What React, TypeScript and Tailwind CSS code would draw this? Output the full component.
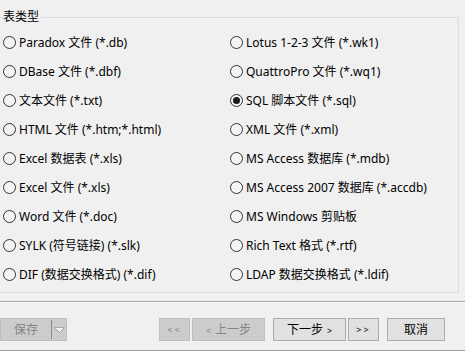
import React from 'react';

interface TypeOption {
	label: string;
	id: string;
}

const leftOptions: TypeOption[] = [
	{ label: 'Paradox 文件 (*.db)', id: 'db' },
	{ label: 'DBase 文件 (*.dbf)', id: 'dbf' },
	{ label: '文本文件 (*.txt)', id: 'txt' },
	{ label: 'HTML 文件 (*.htm;*.html)', id: 'html' },
	{ label: 'Excel 数据表 (*.xls)', id: 'xls1' },
	{ label: 'Excel 文件 (*.xls)', id: 'xls2' },
	{ label: 'Word 文件 (*.doc)', id: 'doc' },
	{ label: 'SYLK (符号链接) (*.slk)', id: 'slk' },
	{ label: 'DIF (数据交换格式) (*.dif)', id: 'dif' },
];

const rightOptions: TypeOption[] = [
	{ label: 'Lotus 1-2-3 文件 (*.wk1)', id: 'wk1' },
	{ label: 'QuattroPro 文件 (*.wq1)', id: 'wq1' },
	{ label: 'SQL 脚本文件 (*.sql)', id: 'sql' },
	{ label: 'XML 文件 (*.xml)', id: 'xml' },
	{ label: 'MS Access 数据库 (*.mdb)', id: 'mdb' },
	{ label: 'MS Access 2007 数据库 (*.accdb)', id: 'accdb' },
	{ label: 'MS Windows 剪贴板', id: 'clip' },
	{ label: 'Rich Text 格式 (*.rtf)', id: 'rtf' },
	{ label: 'LDAP 数据交换格式 (*.ldif)', id: 'ldif' },
];

function Radio({ label, checked }: { label: string; checked?: boolean }) {
	return (
		<div className="flex items-center h-[29px] gap-[3px]">
			<span className="w-[13px] h-[13px] rounded-full border border-[#333333] bg-[#f4f4f4] flex items-center justify-center shrink-0">
				{checked && <span className="w-[7px] h-[7px] rounded-full bg-[#1a1a1a]" />}
			</span>
			<span className="text-[12px] text-black whitespace-nowrap leading-none">{label}</span>
		</div>
	);
}

export default function App() {
	const [selected, setSelected] = React.useState('sql');

	return (
		<div
			className="w-[465px] h-[351px] bg-[#f0f0f0] overflow-hidden flex flex-col"
			style={{ fontFamily: '"Noto Sans", "Noto Sans CJK SC", sans-serif' }}
		>
			<div className="relative mt-[17px] w-[459px] h-[276px] border-t border-r border-b border-[#dcdcdc]">
				<span className="absolute left-[3px] top-[-10px] pr-[2px] bg-[#f0f0f0] text-[12px] leading-[18px] text-black">
					表类型
				</span>
				<div className="grid grid-cols-[227px_1fr] pl-[3px] pt-[10px]">
					<div className="flex flex-col">
						{leftOptions.map(({ label, id }) => (
							<div key={id} onClick={() => setSelected(id)}>
								<Radio label={label} checked={selected === id} />
							</div>
						))}
					</div>
					<div className="flex flex-col">
						{rightOptions.map(({ label, id }) => (
							<div key={id} onClick={() => setSelected(id)}>
								<Radio label={label} checked={selected === id} />
							</div>
						))}
					</div>
				</div>
			</div>

			<div className="mt-[8px] h-[2px] border-t border-[#a0a0a0] border-b border-b-white" />

			<div className="mt-[15px] flex items-center h-[23px] text-[12px]">
				<div className="flex w-[67px] h-[23px] bg-[#cccccc] border border-[#bfbfbf]">
					<span className="w-[50px] flex items-center justify-center text-[#838383]">保存</span>
					<span className="w-px h-[19px] self-center bg-[#8a8a8a]" />
					<span className="flex-1 flex items-center justify-center">
						<svg width="11" height="6" viewBox="0 0 11 6">
							<path d="M0.5 0.5 L10.5 0.5 L5.5 5.5 Z" fill="#f4f4f4" stroke="#a8a8a8" strokeWidth="1" />
						</svg>
					</span>
				</div>

				<div className="ml-[92px] flex gap-[2px]">
					<button className="w-[31px] h-[23px] bg-[#cccccc] border border-[#bfbfbf] text-[#838383] text-[9px] tracking-[2px]">
						&lt;&lt;
					</button>
					<button className="w-[73px] h-[23px] bg-[#cccccc] border border-[#bfbfbf] text-[#838383]">
						<span className="text-[9px] mr-[4px]">&lt;</span>上一步
					</button>
				</div>

				<div className="ml-[8px] flex gap-[2px]">
					<button className="w-[73px] h-[23px] bg-[#e1e1e1] border border-[#adadad] text-black">
						下一步<span className="text-[9px] ml-[4px]">&gt;</span>
					</button>
					<button className="w-[31px] h-[23px] bg-[#e1e1e1] border border-[#adadad] text-black text-[9px] tracking-[2px]">
						&gt;&gt;
					</button>
				</div>

				<button className="ml-[8px] w-[58px] h-[23px] bg-[#e1e1e1] border border-[#adadad] text-black">
					取消
				</button>
			</div>

			<div className="mt-[9px] h-px bg-[#a0a0a0]" />
		</div>
	);
}
